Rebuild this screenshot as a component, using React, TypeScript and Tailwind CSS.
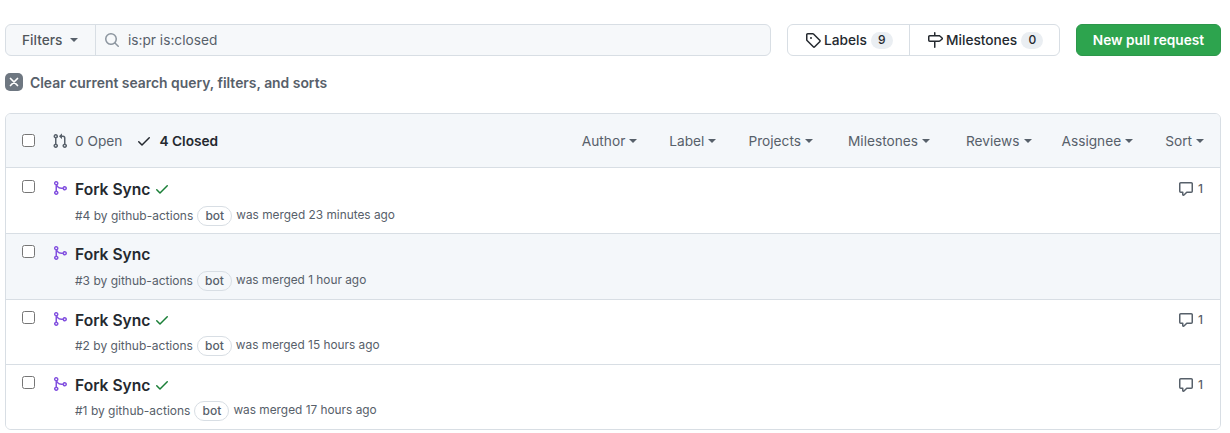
const P = {
  pr: 'M1.5 3.25a2.25 2.25 0 1 1 3 2.122v5.256a2.251 2.251 0 1 1-1.5 0V5.372A2.25 2.25 0 0 1 1.5 3.25Zm5.677-.177L9.573.677A.25.25 0 0 1 10 .854V2.5h1A2.5 2.5 0 0 1 13.5 5v5.628a2.251 2.251 0 1 1-1.5 0V5a1 1 0 0 0-1-1h-1v1.646a.25.25 0 0 1-.427.177L7.177 3.427a.25.25 0 0 1 0-.354ZM3.75 2.5a.75.75 0 1 0 0 1.5.75.75 0 0 0 0-1.5Zm0 9.5a.75.75 0 1 0 0 1.5.75.75 0 0 0 0-1.5Zm8.25.75a.75.75 0 1 0 1.5 0 .75.75 0 0 0-1.5 0Z',
  merge: 'M5.45 5.154A4.25 4.25 0 0 0 9.25 7.5h1.378a2.251 2.251 0 1 1 0 1.5H9.25A5.734 5.734 0 0 1 5 7.123v3.505a2.25 2.25 0 1 1-1.5 0V5.372a2.25 2.25 0 1 1 1.95-.218ZM4.25 13.5a.75.75 0 1 0 0-1.5.75.75 0 0 0 0 1.5Zm8.5-4.5a.75.75 0 1 0 0-1.5.75.75 0 0 0 0 1.5ZM5 3.25a.75.75 0 1 0 0 .005V3.25Z',
  tag: 'M1 7.775V2.75C1 1.784 1.784 1 2.75 1h5.025c.464 0 .91.184 1.238.513l6.25 6.25a1.75 1.75 0 0 1 0 2.474l-5.026 5.026a1.75 1.75 0 0 1-2.474 0l-6.25-6.25A1.752 1.752 0 0 1 1 7.775Zm1.5 0c0 .066.026.13.073.177l6.25 6.25a.25.25 0 0 0 .354 0l5.025-5.025a.25.25 0 0 0 0-.354l-6.25-6.25a.25.25 0 0 0-.177-.073H2.75a.25.25 0 0 0-.25.25ZM6 5a1 1 0 1 1 0 2 1 1 0 0 1 0-2Z',
  milestone: 'M7.75 0a.75.75 0 0 1 .75.75V3h3.634c.414 0 .814.147 1.13.414l2.07 1.75a1.75 1.75 0 0 1 0 2.672l-2.07 1.75a1.75 1.75 0 0 1-1.13.414H8.5v5.25a.75.75 0 0 1-1.5 0V10H2.75A1.75 1.75 0 0 1 1 8.25v-3.5C1 3.784 1.784 3 2.75 3H7V.75A.75.75 0 0 1 7.75 0Zm4.384 8.5a.25.25 0 0 0 .161-.06l2.07-1.75a.25.25 0 0 0 0-.38l-2.07-1.75a.25.25 0 0 0-.161-.06H2.75a.25.25 0 0 0-.25.25v3.5c0 .138.112.25.25.25h9.384Z',
  check: 'M13.78 4.22a.75.75 0 0 1 0 1.06l-7.25 7.25a.75.75 0 0 1-1.06 0L2.22 9.28a.751.751 0 0 1 .018-1.042.751.751 0 0 1 1.042-.018L6 10.94l6.72-6.72a.75.75 0 0 1 1.06 0Z',
  comment: 'M1 2.75C1 1.784 1.784 1 2.75 1h10.5c.966 0 1.75.784 1.75 1.75v7.5A1.75 1.75 0 0 1 13.25 12H9.06l-2.573 2.573A1.458 1.458 0 0 1 4 13.543V12H2.75A1.75 1.75 0 0 1 1 10.25Zm1.75-.25a.25.25 0 0 0-.25.25v7.5c0 .138.112.25.25.25h2a.75.75 0 0 1 .75.75v2.19l2.72-2.72a.749.749 0 0 1 .53-.22h4.5a.25.25 0 0 0 .25-.25v-7.5a.25.25 0 0 0-.25-.25Z',
  search: 'M10.68 11.74a6 6 0 0 1-7.922-8.982 6 6 0 0 1 8.982 7.922l3.04 3.04a.749.749 0 0 1-.326 1.275.749.749 0 0 1-.734-.215ZM11.5 7a4.499 4.499 0 1 0-8.997 0A4.499 4.499 0 0 0 11.5 7Z',
};

function Icon({ d, className }: { d: string; className: string }) {
  return (
    <svg viewBox="0 0 16 16" fill="currentColor" className={className}>
      <path d={d} />
    </svg>
  );
}

function Caret({ className = '' }: { className?: string }) {
  return <span className={`inline-block w-0 h-0 border-x-4 border-x-transparent border-t-4 border-t-current ${className}`} />;
}

function Checkbox() {
  return <span className="block w-[13px] h-[13px] rounded-[2.5px] border border-[#767676] bg-white shrink-0" />;
}

const filters = [
  { name: 'Author', w: 'mr-[32px]' },
  { name: 'Label', w: 'mr-[32px]' },
  { name: 'Projects', w: 'mr-[35px]' },
  { name: 'Milestones', w: 'mr-[36px]' },
  { name: 'Reviews', w: 'mr-[30px]' },
  { name: 'Assignee', w: 'mr-[32px]' },
  { name: 'Sort', w: '' },
];

const rows = [
  { num: 4, time: '23 minutes ago', ok: true, h: 'h-[66px]', pt: 'pt-[8px]', mt: 'mt-[4px]', bg: 'bg-white' },
  { num: 3, time: '1 hour ago', ok: false, h: 'h-[66px]', pt: 'pt-[7px]', mt: 'mt-[4px]', bg: 'bg-[#f4f7fa]' },
  { num: 2, time: '15 hours ago', ok: true, h: 'h-[65px]', pt: 'pt-[7px]', mt: 'mt-[3px]', bg: 'bg-white' },
  { num: 1, time: '17 hours ago', ok: true, h: 'h-[65px]', pt: 'pt-[7px]', mt: 'mt-[3px]', bg: 'bg-white' },
];

export default function App() {
  return (
    <div className="w-[1230px] h-[433px] overflow-hidden bg-white pl-[5px] pr-[9px] pt-[24px] text-[13.7px] text-[#24292f] font-['Inter','Liberation_Sans',sans-serif]">
      <div className="flex items-stretch h-[32px]">
        <div className="flex flex-1 rounded-md border border-[#d8dee4] bg-[#f6f8fa] text-[#57606a]">
          <div className="flex items-center w-[90px] pl-[16px] border-r border-[#d8dee4] font-medium text-[#24292f]/80">
            Filters
            <Caret className="ml-[8px] text-[#57606a]" />
          </div>
          <div className="flex items-center pl-[8px]">
            <Icon d={P.search} className="w-4 h-4 text-[#8c959f]" />
            <span className="ml-[8px]">is:pr is:closed</span>
          </div>
        </div>
        <div className="flex ml-[16px] w-[273px] rounded-md border border-[#d8dee4] bg-white font-medium">
          <div className="flex items-center w-[122px] pl-[17px] border-r border-[#d8dee4]">
            <Icon d={P.tag} className="w-4 h-4" />
            <span className="ml-[3px]">Labels</span>
            <span className="ml-[4px] flex items-center justify-center w-[22px] h-[17px] rounded-full bg-[#eaeef2] text-[12px]">9</span>
          </div>
          <div className="flex items-center pl-[17px]">
            <Icon d={P.milestone} className="w-4 h-4" />
            <span className="ml-[3px]">Milestones</span>
            <span className="ml-[4px] flex items-center justify-center w-[22px] h-[17px] rounded-full bg-[#eaeef2] text-[12px]">0</span>
          </div>
        </div>
        <div className="flex items-center justify-center ml-[16px] w-[145px] rounded-md bg-[#2da44e] border border-[#2c974b] text-white font-semibold">
          New pull request
        </div>
      </div>

      <div className="flex items-center mt-[17px] h-[18px] text-[13.9px] text-[#57606a] font-semibold">
        <span className="flex items-center justify-center w-[18px] h-[18px] rounded-[5px] bg-[#6e7781]">
          <svg viewBox="0 0 16 16" className="w-[14px] h-[14px] text-white" fill="none" stroke="currentColor" strokeWidth="2" strokeLinecap="round">
            <path d="M4 4l8 8M12 4l-8 8" />
          </svg>
        </span>
        <span className="ml-[7px] pt-[2px]">Clear current search query, filters, and sorts</span>
      </div>

      <div className="mt-[22px] h-[317px] rounded-md border border-[#d8dee4] overflow-hidden">
        <div className="flex items-center h-[54px] pl-[16px] pr-[16px] bg-[#f4f7fa] border-b border-[#d8dee4]">
          <Checkbox />
          <Icon d={P.pr} className="ml-[17px] w-4 h-4 text-[#57606a]" />
          <span className="ml-[7px] pt-px text-[#57606a]">0 Open</span>
          <Icon d={P.check} className="ml-[14px] w-4 h-4" />
          <span className="ml-[7px] pt-px font-semibold">4 Closed</span>
          <div className="flex items-center ml-auto pt-px text-[#57606a]">
            {filters.map((f) => (
              <span key={f.name} className={`flex items-center ${f.w}`}>
                {f.name}
                <Caret className="ml-[4px]" />
              </span>
            ))}
          </div>
        </div>
        {rows.map((r, i) => (
          <div key={r.num} className={`flex ${r.h} pl-[16px] pr-[17px] ${r.pt} ${r.bg} ${i < 3 ? 'border-b border-[#d8dee4]' : ''}`}>
            <div className="pt-[4px]"><Checkbox /></div>
            <Icon d={P.merge} className="ml-[17px] mt-[4px] w-4 h-4 text-[#8250df]" />
            <div className="ml-[7px] flex-1">
              <div className="flex items-center h-[26px]">
                <span className="pt-px text-[15.6px] font-semibold">Fork Sync</span>
                {r.ok && <Icon d={P.check} className="ml-[4px] w-4 h-4 text-[#1a7f37]" />}
              </div>
              <div className={`flex items-center ${r.mt} text-[12px] text-[#57606a]`}>
                <span className="whitespace-nowrap">#{r.num} by github-actions</span>
                <span className="mx-[4px] flex items-center justify-center w-[35px] h-[20px] rounded-full border border-[#d8dee4] font-medium">bot</span>
                <span className="text-[11.85px]">was merged {r.time}</span>
              </div>
            </div>
            {r.ok && (
              <div className="flex items-start pt-[5px] text-[12px] text-[#57606a] font-medium">
                <Icon d={P.comment} className="w-4 h-4" />
                <span className="ml-[4px] leading-[15px]">1</span>
              </div>
            )}
          </div>
        ))}
      </div>
    </div>
  );
}
